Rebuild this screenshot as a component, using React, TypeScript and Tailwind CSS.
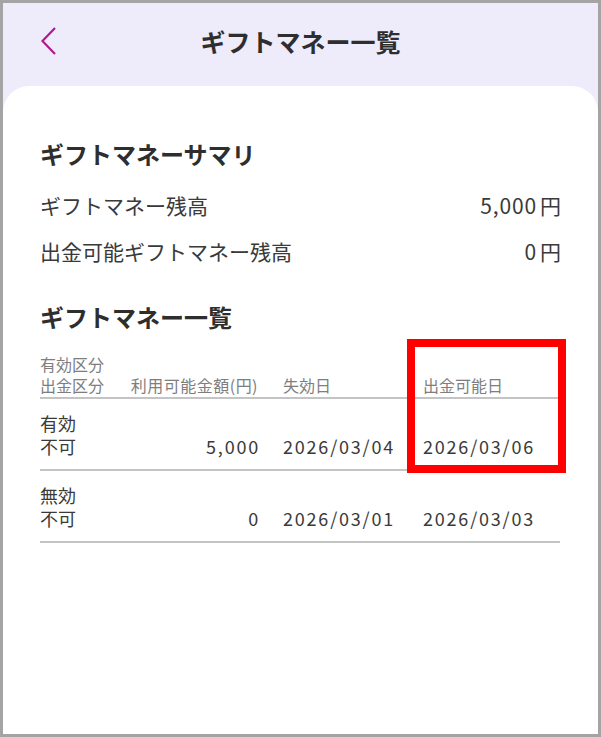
const font = { fontFamily: '"Noto Sans CJK JP", "Noto Sans", sans-serif' };

const rows = [
  { kind: '有効\n不可', amount: '5,000', expires: '2026/03/04', available: '2026/03/06' },
  { kind: '無効\n不可', amount: '0', expires: '2026/03/01', available: '2026/03/03' },
];

function BackIcon() {
  return (
    <svg width="16" height="28" viewBox="0 0 16 28" fill="none">
      <polyline points="14,1 1.5,14 14,27" stroke="#b0198f" strokeWidth="2.2" />
    </svg>
  );
}

export default function App() {
  return (
    <div
      className="relative w-[601px] h-[737px] border-[3px] border-[#a4a4a4] bg-[#eeebfb] flex flex-col text-[#333333] overflow-hidden"
      style={font}
    >
      {/* header */}
      <div className="relative h-[83px] flex-shrink-0 flex items-center justify-center pb-[7px]">
        <div className="absolute left-[38px] top-[24px]">
          <BackIcon />
        </div>
        <h1 className="text-[25px] font-bold leading-[32px] text-[#2e2e2e]">ギフトマネー一覧</h1>
      </div>

      {/* content card */}
      <div className="flex-1 bg-white rounded-t-[26px] px-[37px] pt-[52px]">
        <h2 className="text-[24px] font-bold leading-[32px] text-[#2e2e2e]">ギフトマネーサマリ</h2>

        <div className="mt-[13px] text-[#3a3a3a]">
          <div className="h-[46px] flex items-center justify-between text-[21px]">
            <span>ギフトマネー残高</span>
            <span className="tracking-[0.04em]">
              5,000<span className="ml-[3px] tracking-normal">円</span>
            </span>
          </div>
          <div className="h-[46px] flex items-center justify-between text-[21px]">
            <span>出金可能ギフトマネー残高</span>
            <span className="tracking-[0.04em]">
              0<span className="ml-[3px] tracking-normal">円</span>
            </span>
          </div>
        </div>

        <h2 className="mt-[26px] text-[24px] font-bold leading-[32px] text-[#2e2e2e]">ギフトマネー一覧</h2>

        {/* table */}
        <div className="mt-[21px] w-[520px]">
          <div className="grid grid-cols-[88px_130px_165px_137px] items-end border-b-2 border-[#c4c4c4] text-[16px] leading-[21px] text-[#7e7e7e] pb-[1px]">
            <div className="whitespace-pre-line">{'有効区分\n出金区分'}</div>
            <div className="text-right tracking-[0.03em]">利用可能金額(円)</div>
            <div className="pl-[25px]">失効日</div>
            <div>出金可能日</div>
          </div>

          {rows.map((r, i) => (
            <div
              key={i}
              className="grid grid-cols-[88px_130px_165px_137px] items-end border-b-2 border-[#c4c4c4] text-[18px] leading-[23px] pt-[13px] pb-[11px] text-[#3a3a3a]"
            >
              <div className="whitespace-pre-line">{r.kind}</div>
              <div className="text-right tracking-[0.1em] mr-[-2px]">{r.amount}</div>
              <div className="pl-[25px] tracking-[0.1em]">{r.expires}</div>
              <div className="tracking-[0.1em]">{r.available}</div>
            </div>
          ))}
        </div>
      </div>

      {/* highlight overlay */}
      <div className="absolute left-[404px] top-[336px] w-[159px] h-[134px] border-[8px] border-[#ff0000] pointer-events-none" />
    </div>
  );
}
